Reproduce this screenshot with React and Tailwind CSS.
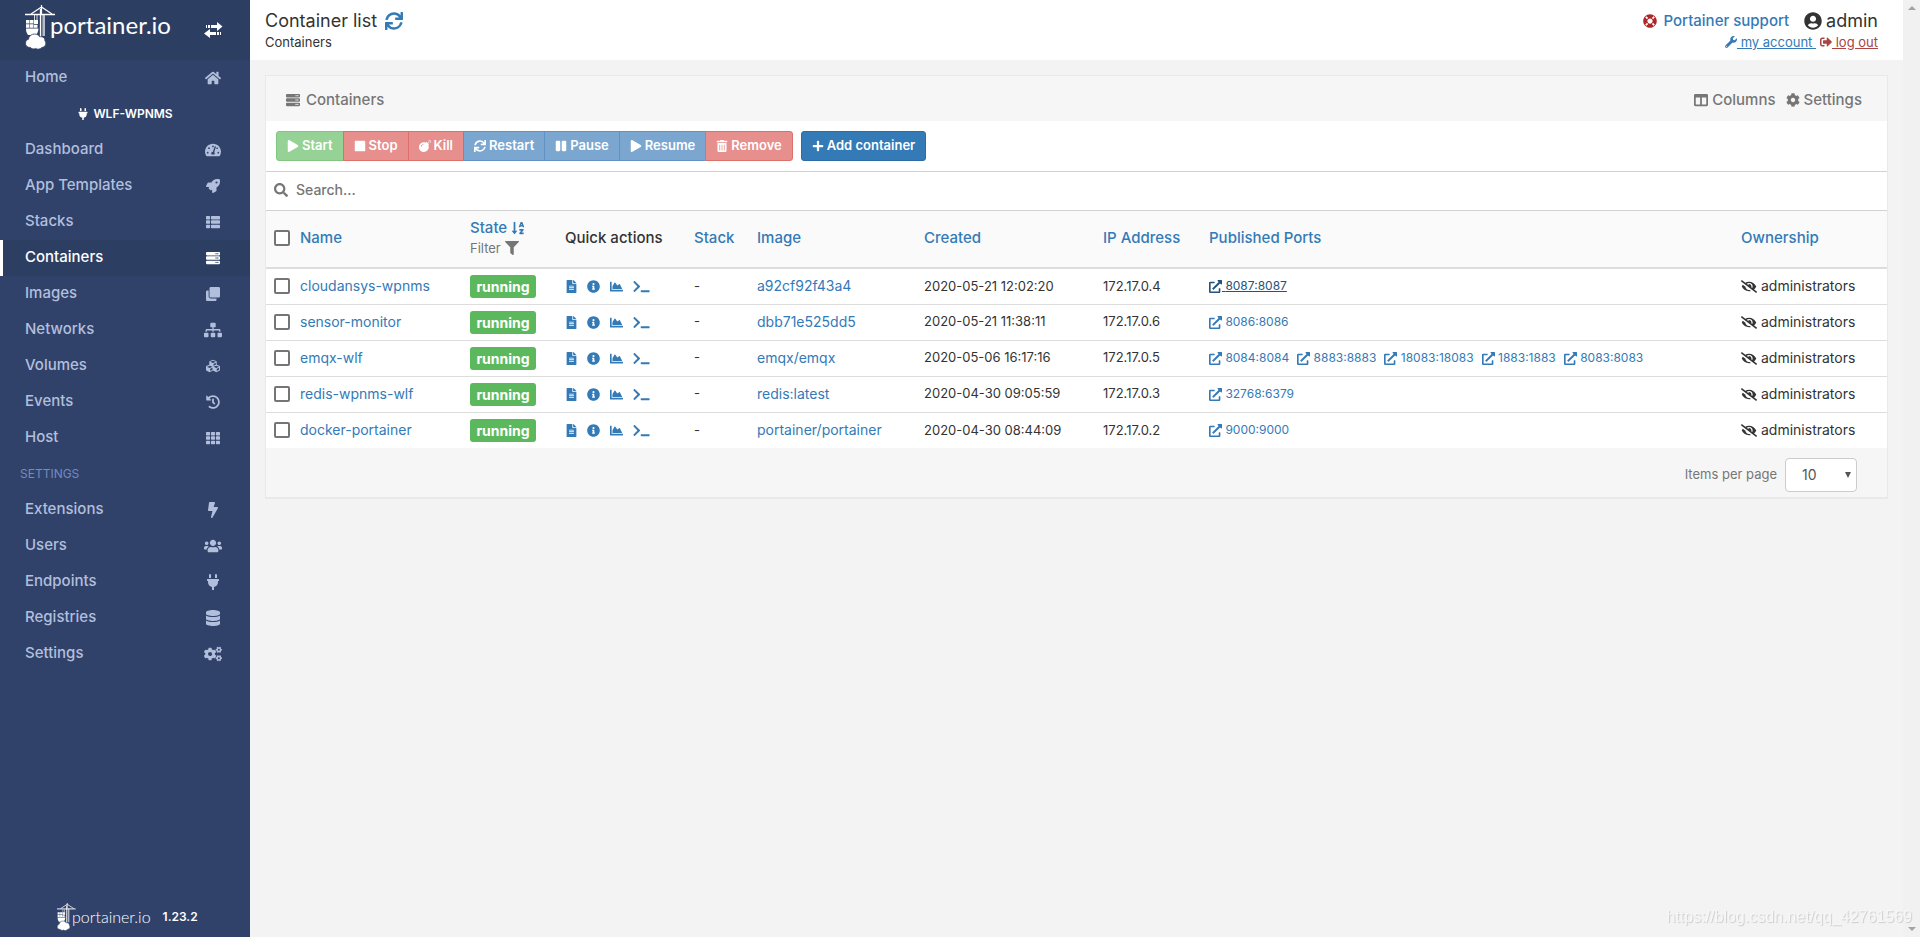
import React, { useState } from 'react';
import {
  FaBolt, FaBomb, FaChartArea, FaClone, FaCog, FaCogs, FaColumns, FaCubes, FaDatabase,
  FaExternalLinkAlt, FaEyeSlash, FaFileAlt, FaFilter, FaHistory, FaHome, FaInfoCircle,
  FaLifeRing, FaPause, FaPlay, FaPlug, FaPlus, FaRocket, FaSearch, FaServer, FaSignOutAlt,
  FaSitemap, FaSortAlphaDown, FaStop, FaSync, FaTachometerAlt, FaTerminal, FaTh, FaThList,
  FaTrashAlt, FaUserCircle, FaUsers, FaWrench,
} from 'react-icons/fa';

const endpointLinks = [
  { label: 'Dashboard', icon: FaTachometerAlt, size: 'w-4' },
  { label: 'App Templates', icon: FaRocket },
  { label: 'Stacks', icon: FaThList },
  { label: 'Containers', icon: FaServer, active: true },
  { label: 'Images', icon: FaClone },
  { label: 'Networks', icon: FaSitemap, size: 'w-[18px]' },
  { label: 'Volumes', icon: FaCubes },
  { label: 'Events', icon: FaHistory },
  { label: 'Host', icon: FaTh },
];

const settingsLinks = [
  { label: 'Extensions', icon: FaBolt },
  { label: 'Users', icon: FaUsers, size: 'w-[18px]' },
  { label: 'Endpoints', icon: FaPlug },
  { label: 'Registries', icon: FaDatabase },
  { label: 'Settings', icon: FaCogs, size: 'w-[18px]' },
];

const green = 'bg-[#96d296] border-[#82c682]';
const red = 'bg-[#e68f8d] border-[#dd706d]';
const blue = 'bg-[#7ba6cf] border-[#5f92c3]';

const actions = [
  { label: 'Start', icon: FaPlay, color: green },
  { label: 'Stop', icon: FaStop, color: red },
  { label: 'Kill', icon: FaBomb, color: red },
  { label: 'Restart', icon: FaSync, color: blue },
  { label: 'Pause', icon: FaPause, color: blue },
  { label: 'Resume', icon: FaPlay, color: blue },
  { label: 'Remove', icon: FaTrashAlt, color: red },
];

const containers = [
  { name: 'cloudansys-wpnms', image: 'a92cf92f43a4', created: '2020-05-21 12:02:20', ip: '172.17.0.4', ports: ['8087:8087'], hovered: true },
  { name: 'sensor-monitor', image: 'dbb71e525dd5', created: '2020-05-21 11:38:11', ip: '172.17.0.6', ports: ['8086:8086'] },
  { name: 'emqx-wlf', image: 'emqx/emqx', created: '2020-05-06 16:17:16', ip: '172.17.0.5', ports: ['8084:8084', '8883:8883', '18083:18083', '1883:1883', '8083:8083'] },
  { name: 'redis-wpnms-wlf', image: 'redis:latest', created: '2020-04-30 09:05:59', ip: '172.17.0.3', ports: ['32768:6379'] },
  { name: 'docker-portainer', image: 'portainer/portainer', created: '2020-04-30 08:44:09', ip: '172.17.0.2', ports: ['9000:9000'] },
];

const checkboxStyle =
  'block w-4 h-4 appearance-none rounded-xs border-2 border-[#757575] bg-white checked:bg-[#337ab7]';

function CraneLogo({ className }) {
  return (
    <svg viewBox="0 0 31 45" className={className} fill="none" stroke="#fff" aria-hidden="true">
      <path d="M1 9.500h30" strokeWidth="1.500" />
      <path d="M17.500 0v9M17.500 2L7 9M17.500 2L28 9" strokeWidth="1.200" />
      <path d="M16.500 4v28M20 9v22" strokeWidth="1.300" />
      <path d="M18.300 9v22" strokeWidth="0.500" />
      <path d="M10.500 10v5M13 10v5" strokeWidth="0.800" />
      <path d="M10 15h4v4h-4zM2 15h3.500v3.500H2zM6 15h3.500v3.500H6zM2 19.200h3.500v3.500H2zM6 19.200h3.500v3.500H6zM10 19.700h3.500v3H10zM2 23.500h12.500c-.3 3-1 5-2.500 6.500H4c-1.500-2-2-4-2-6.500z" fill="#fff" stroke="none" />
      <path d="M6.500 42.500c-3.500 0-5.200-2-5-4.500.2-2 1.200-3.200 3-3.700.2-3 2.800-5.300 6-5.300 2.300 0 4.200 1 5.200 2.800 3-.6 5.500 1.200 5.200 4 2 2.500.8 6.400-3.200 6.700-1.200 1.700-4.400 2.300-6.200.9-1.700 1-3.800.6-5-.9z" fill="#fff" stroke="#2f4068" strokeWidth="0.800" />
    </svg>
  );
}

// Two striped arrows pointing in opposite directions
function TransferIcon() {
  return (
    <svg viewBox="0 0 19 16" className="w-[19px] h-4" fill="currentColor" aria-hidden="true">
      <path d="M2 3h1v3H2zM4 3h2v3H4zM7 3h6V0l5.500 4.500L13 9V6H7z" />
      <path d="M6 7v3h6v3H6v3L0 11.500zM13 10h2v3h-2zM16 10h1v3h-1z" />
    </svg>
  );
}

function SidebarLink({ label, icon: Icon, size = 'w-[14px]', active }) {
  return (
    <li>
      <a
        href="#"
        className={`flex h-9 items-center justify-between border-l-[3px] pr-[27px] pb-px pl-[22px] text-[15px] font-medium ${
          active ? 'border-white bg-[#2d3e63] text-white' : 'border-transparent text-[#b2bfdc]'
        }`}
      >
        {label}
        <span className="flex w-5 justify-center">
          <Icon className={`h-4 shrink-0 ${size}`} />
        </span>
      </a>
    </li>
  );
}

function Sidebar() {
  return (
    <aside className="flex w-[250px] shrink-0 flex-col bg-[#30426a]">
      <div className="flex h-15 items-center justify-between bg-[#2d3e63] pl-6 pr-[27px] text-white">
        <a href="#" className="flex items-start pb-[6px]">
          <CraneLogo className="w-[31px] h-[45px]" />
          <span className="-ml-[5px] pt-1 font-['Lato'] text-2xl leading-8">portainer.io</span>
        </a>
        <button type="button" aria-label="Toggle sidebar">
          <TransferIcon />
        </button>
      </div>
      <ul>
        <SidebarLink label="Home" icon={FaHome} size="w-4" />
        <li className="flex h-9 items-center justify-center gap-1 text-xs font-semibold text-white">
          <FaPlug /> WLF-WPNMS
        </li>
        {endpointLinks.map((link) => (
          <SidebarLink key={link.label} {...link} />
        ))}
        <li className="flex h-9 items-center pl-5 text-xs text-[#738bc0]">SETTINGS</li>
        {settingsLinks.map((link) => (
          <SidebarLink key={link.label} {...link} />
        ))}
      </ul>
      <div className="mt-auto flex items-center pb-[6px] pl-14 text-white">
        <CraneLogo className="w-5 h-7" />
        <span className="-ml-1 font-['Lato'] text-base leading-6 font-light">portainer.io</span>
        <span className="pl-3 text-xs font-semibold">1.23.2</span>
      </div>
    </aside>
  );
}

function Header() {
  return (
    <header className="flex h-15 justify-between bg-white pl-[15px] pr-[25px] pt-2 text-[#333]">
      <div>
        <h1 className="flex items-center gap-2 text-lg leading-[26px]">
          Container list
          <a href="#" aria-label="Refresh" className="text-[#337ab7]">
            <FaSync />
          </a>
        </h1>
        <div className="text-[13px] leading-4">Containers</div>
      </div>
      <div>
        <div className="flex items-center justify-end">
          <a href="#" className="flex items-center gap-[6px] text-[15px] font-medium text-[#337ab7]">
            <FaLifeRing className="text-sm text-[#b02525]" /> Portainer support
          </a>
          <span className="flex items-center gap-1 pl-[15px] text-lg leading-[26px]">
            <FaUserCircle /> admin
          </span>
        </div>
        <div className="flex items-center justify-end gap-1 text-[13px] leading-4">
          <a href="#" className="flex items-center text-[#337ab7]">
            <FaWrench className="h-3 w-3" />
            <span className="whitespace-pre underline"> my account </span>
          </a>
          <a href="#" className="flex items-center text-[#a94442]">
            <FaSignOutAlt className="h-3 w-3" />
            <span className="whitespace-pre underline"> log out</span>
          </a>
        </div>
      </div>
    </header>
  );
}

function ContainerRow({ name, image, created, ip, ports, hovered }) {
  return (
    <tr className="h-9 border-t border-[#ddd] first:border-t-0">
      <td className="pl-2">
        <div className="flex items-center gap-[10px]">
          <input type="checkbox" aria-label={name} className={checkboxStyle} />
          <a href="#" className="text-sm text-[#337ab7]">{name}</a>
        </div>
      </td>
      <td className="pl-2">
        <span className="block w-[66px] rounded-[3px] bg-[#5cb85c] text-center text-sm leading-[23px] font-bold text-white">running</span>
      </td>
      <td className="pl-2">
        <div className="flex items-center gap-[10px] text-[13px] text-[#337ab7]">
          <a href="#" aria-label="Logs" className="flex w-3 justify-center"><FaFileAlt className="shrink-0" /></a>
          <a href="#" aria-label="Inspect"><FaInfoCircle /></a>
          <a href="#" aria-label="Stats"><FaChartArea /></a>
          <a href="#" aria-label="Console"><FaTerminal className="w-[17px]" /></a>
        </div>
      </td>
      <td className="pl-2">-</td>
      <td className="pl-2"><a href="#" className="text-sm text-[#337ab7]">{image}</a></td>
      <td className="pl-2">{created}</td>
      <td className="pl-2">{ip}</td>
      <td className="pl-2">
        <div className="flex gap-2 text-xs">
          {ports.map((port) => (
            <a key={port} href="#" className={`flex items-center ${hovered ? 'text-[#23527c]' : 'text-[#337ab7]'}`}>
              <FaExternalLinkAlt className="text-[13px]" />
              <span className={hovered ? 'whitespace-pre underline' : 'whitespace-pre'}> {port}</span>
            </a>
          ))}
        </div>
      </td>
      <td className="pl-2">
        <span className="flex items-center gap-1 text-sm"><FaEyeSlash className="h-[13px] w-4" /> administrators</span>
      </td>
    </tr>
  );
}

function ContainersTable() {
  return (
    <table className="w-full table-fixed border-collapse text-[13px] text-[#333]">
      <colgroup>
        <col className="w-[196px]" />
        <col className="w-[95px]" />
        <col className="w-[129px]" />
        <col className="w-[63px]" />
        <col className="w-[167px]" />
        <col className="w-[179px]" />
        <col className="w-[106px]" />
        <col />
        <col className="w-[154px]" />
      </colgroup>
      <thead className="bg-[#fafafa] text-left text-[15px] text-[#337ab7]">
        <tr className="h-[57px] border-b-2 border-[#ddd] *:pb-[2px] *:pl-2 *:font-medium">
          <th>
            <div className="flex items-center gap-[10px]">
              <input type="checkbox" aria-label="Select all" className={checkboxStyle} />
              <a href="#">Name</a>
            </div>
          </th>
          <th>
            <a href="#" className="flex items-center gap-1 leading-5">State <FaSortAlphaDown className="text-sm" /></a>
            <button type="button" className="flex items-center gap-1 text-[13px] leading-5 font-normal text-[#767676]">
              Filter <FaFilter className="text-sm" />
            </button>
          </th>
          <th className="text-[#333]">Quick actions</th>
          <th><a href="#">Stack</a></th>
          <th><a href="#">Image</a></th>
          <th><a href="#">Created</a></th>
          <th><a href="#">IP Address</a></th>
          <th><a href="#">Published Ports</a></th>
          <th><a href="#">Ownership</a></th>
        </tr>
      </thead>
      <tbody>
        {containers.map((c) => (
          <ContainerRow key={c.name} {...c} />
        ))}
      </tbody>
    </table>
  );
}

export default function App() {
  const [search, setSearch] = useState('');

  return (
    <div className="flex min-h-screen bg-[#f3f3f3] font-['Inter',sans-serif]">
      <Sidebar />
      <div className="min-w-0 flex-1">
        <Header />
        <main className="p-[15px]">
          <section className="border border-b-2 border-[#e9e9e9] bg-white">
            <div className="flex h-[45px] items-center justify-between bg-[#f6f6f6] pt-[3px] pl-5 pr-[25px] text-[15px] font-medium text-[#767676]">
              <h2 className="flex items-center gap-[6px]"><FaServer className="text-sm" /> Containers</h2>
              <div className="flex gap-[10px]">
                <button type="button" className="flex items-center gap-1"><FaColumns className="text-sm" /> Columns</button>
                <button type="button" className="flex items-center gap-1"><FaCog className="text-sm" /> Settings</button>
              </div>
            </div>
            <div className="flex h-[50px] items-center gap-2 px-[10px] text-[13px] font-semibold text-white">
              <div className="flex">
                {actions.map(({ label, icon: Icon, color }) => (
                  <button
                    key={label}
                    type="button"
                    disabled
                    className={`-ml-px flex h-[30px] items-center gap-[3px] border px-[10px] first:ml-0 first:rounded-l-[3px] last:rounded-r-[3px] ${color}`}
                  >
                    <Icon className="text-xs" /> {label}
                  </button>
                ))}
              </div>
              <button type="button" className="flex h-[30px] items-center gap-[3px] rounded-[3px] border border-[#2e6da4] bg-[#337ab7] px-[10px]">
                <FaPlus className="text-xs" /> Add container
              </button>
            </div>
            <label className="flex h-10 items-center gap-2 border-y border-[#d2d2d2] px-2 pb-[2px] text-sm text-[#767676]">
              <FaSearch />
              <input
                type="text"
                aria-label="Search"
                placeholder="Search..."
                value={search}
                onChange={(e) => setSearch(e.target.value)}
                className="flex-1 font-medium outline-none placeholder:text-[#767676]"
              />
            </label>
            <ContainersTable />
            <div className="flex h-[49px] items-center justify-end gap-2 bg-[#f6f6f6] pt-1 pr-[30px] text-[13px] text-[#767676]">
              <label htmlFor="page-size">Items per page</label>
              <div className="relative">
                <select id="page-size" defaultValue="10" className="block h-[34px] w-[72px] appearance-none rounded-sm border border-[#ccc] bg-white pl-4 text-sm text-[#555]">
                  <option>10</option>
                  <option>25</option>
                  <option>50</option>
                  <option>100</option>
                </select>
                <svg viewBox="0 0 6 6" className="pointer-events-none absolute right-[6px] top-[14px] h-[6px] w-[6px]" fill="#555">
                  <path d="M0 0h6L3 6z" />
                </svg>
              </div>
            </div>
          </section>
        </main>
      </div>
      <div className="flex w-[17px] shrink-0 flex-col items-center justify-between bg-[#f1f1f1] py-[6px]">
        <svg viewBox="0 0 8 4" className="h-1 w-2" fill="#a3a3a3"><path d="M0 4l4-4 4 4z" /></svg>
        <svg viewBox="0 0 8 4" className="h-1 w-2" fill="#a3a3a3"><path d="M0 0l4 4 4-4z" /></svg>
      </div>
      <div className="fixed right-2 bottom-2 font-['Liberation_Sans'] text-base text-[#f7f7f7] [text-shadow:1px_1px_1px_#ccc]">
        https://blog.csdn.net/qq_42761569
      </div>
    </div>
  );
}
